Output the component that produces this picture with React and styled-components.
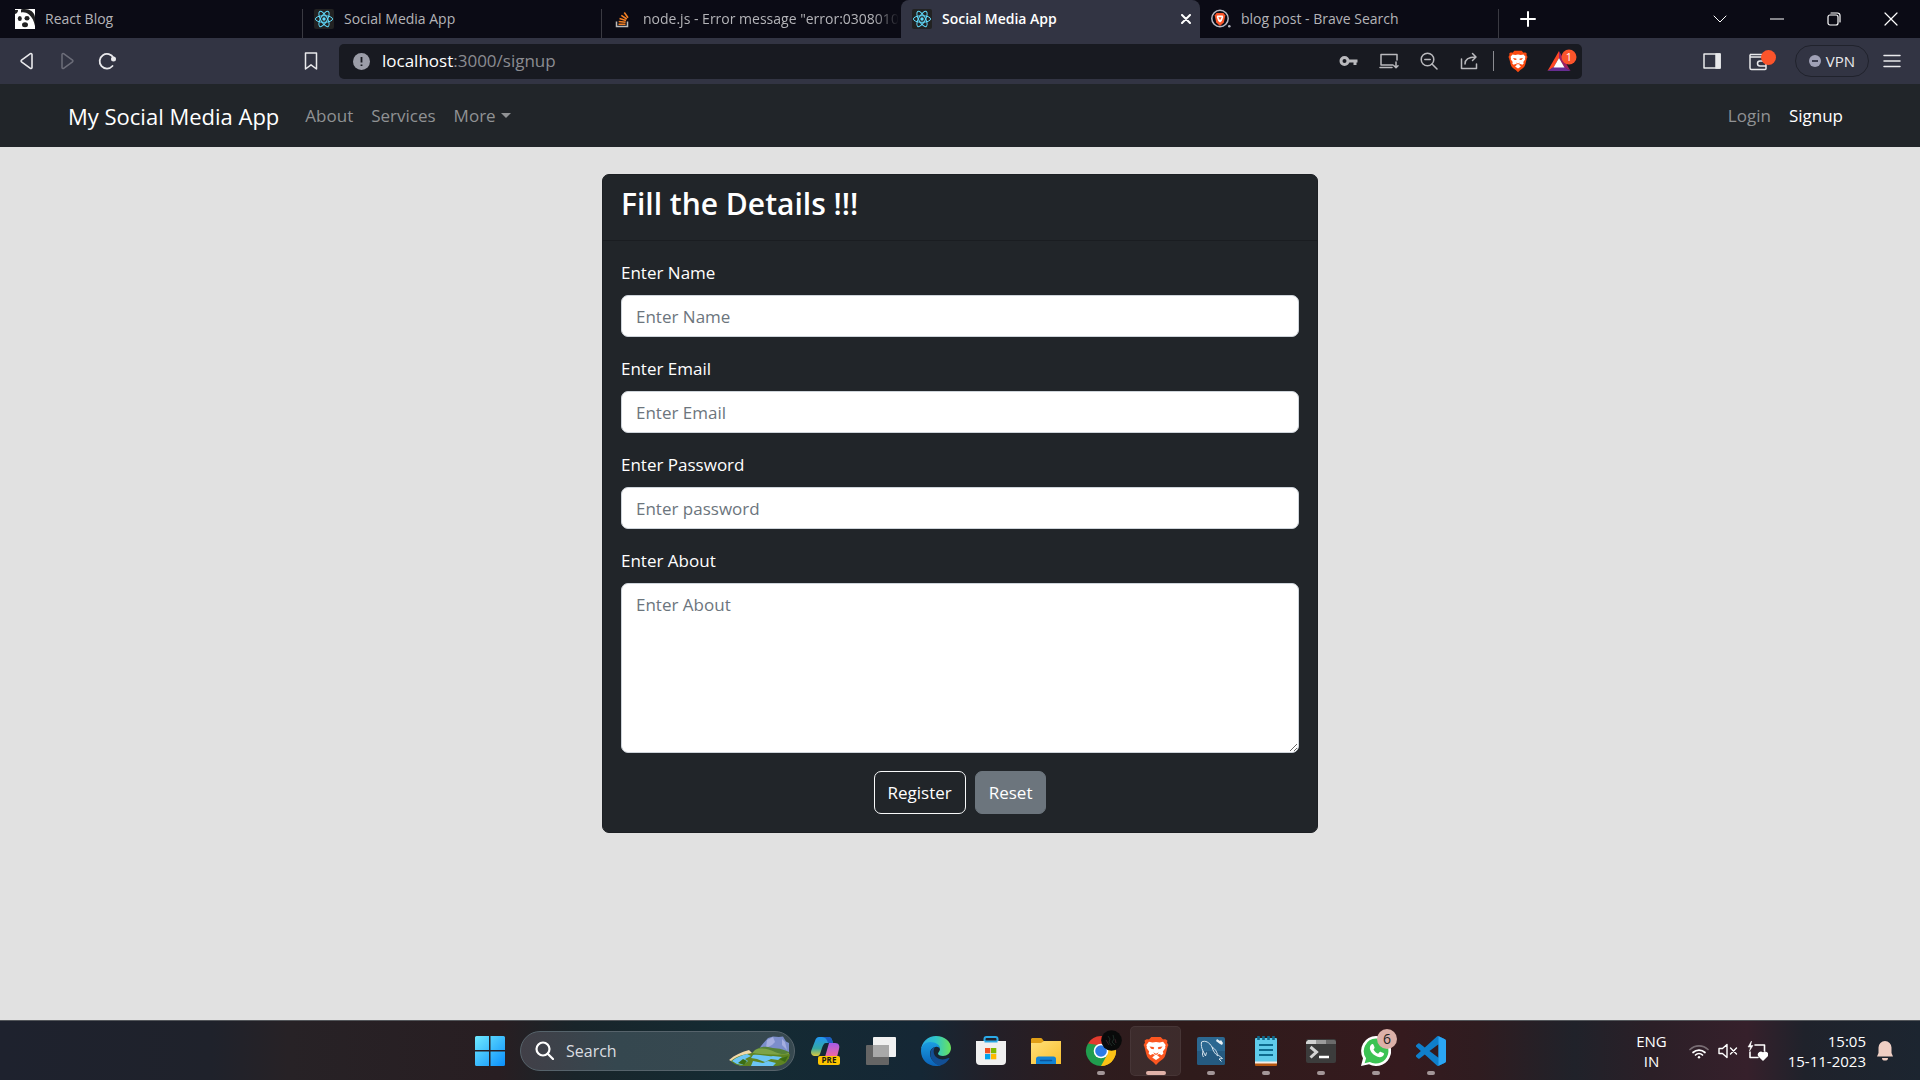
import React from "react";
import styled, { createGlobalStyle, css } from "styled-components";

const GlobalStyle = createGlobalStyle`
  * { box-sizing: border-box; }
  body { margin: 0; background: #e1e1e1; }
  body, button, input, textarea { font-family: "Open Sans", "Noto Sans", sans-serif; }
  button { margin: 0; padding: 0; border: 0; background: none; color: inherit; cursor: pointer; }
  svg { display: block; flex: none; }
  a { text-decoration: none; }
`;

const Screen = styled.div`
  min-height: 100vh;
  display: flex;
  flex-direction: column;
`;

/* ---------- browser chrome ---------- */

const TabStrip = styled.div`
  height: 38px;
  padding: 0 1px 0 4px;
  display: flex;
  background: #0b0b15;
  color: #b4b4b8;
`;

const Tab = styled.button`
  flex: 0 1 299px;
  min-width: 0;
  height: 38px;
  padding: 0 9px 0 11px;
  display: flex;
  align-items: center;
  gap: 10px;
  font-size: 14px;
  line-height: 20px;
  text-align: left;
  background: linear-gradient(#3a3a42, #3a3a42) right bottom / 1px 29px no-repeat;
  ${(p) =>
    p.$beforeActive &&
    css`
      padding-right: 2px;
      background: none;
    `}
  ${(p) =>
    p.$active &&
    css`
      background: #323443;
      color: #fff;
      font-weight: 600;
      border-radius: 8px 8px 0 0;
    `}
`;

const TabTitle = styled.span`
  flex: 1;
  overflow: hidden;
  white-space: nowrap;
  ${(p) => p.$fade && "mask-image: linear-gradient(90deg, #000 90%, transparent);"}
`;

const WindowButton = styled.button`
  width: 57px;
  height: 38px;
  display: grid;
  place-items: center;
  color: #fff;
`;

const Spacer = styled.div`
  flex: 1;
`;

const Toolbar = styled.div`
  height: 46px;
  display: grid;
  grid-template-columns: 339px 1fr 338px;
  align-items: center;
  background: #323443;
  color: #e9e9ec;
`;

const ToolGroup = styled.div`
  display: flex;
  align-items: center;
  padding: ${(p) => p.$pad};
  gap: ${(p) => p.$gap || 0}px;
`;

const ToolButton = styled.button`
  width: ${(p) => p.$w || 40}px;
  height: 35px;
  display: grid;
  place-items: center;
  color: ${(p) => p.$color || "inherit"};
`;

const AddressBar = styled.div`
  height: 35px;
  padding-left: 14px;
  border-radius: 5px;
  display: flex;
  align-items: center;
  background: #181a21;
  color: #b9b9bd;
`;

const Address = styled.button`
  flex: 1;
  padding-left: 12px;
  text-align: left;
  font-size: 17px;
  line-height: 24px;
  color: #8b8c91;
`;

const Host = styled.span`
  color: #fff;
`;

const Divider = styled.span`
  width: 1px;
  height: 20px;
  margin: 0 4px;
  background: #8b8c91;
`;

const VpnButton = styled.button`
  width: 74px;
  height: 32px;
  border: 1px solid #20222c;
  border-radius: 16px;
  display: flex;
  align-items: center;
  justify-content: center;
  gap: 5px;
  font-size: 15px;
  line-height: 20px;
`;

/* ---------- site ---------- */

const Navbar = styled.nav`
  height: 63px;
  padding: 0 68px;
  display: flex;
  align-items: center;
  background: #212529;
`;

const Brand = styled.a`
  margin-right: 17px;
  font-size: 22px;
  line-height: 32px;
  color: #fff;
`;

const NavLink = styled.a`
  padding: 9px;
  display: flex;
  align-items: center;
  gap: 5px;
  font-size: 17px;
  line-height: 26px;
  color: ${(p) => (p.$active ? "#fff" : "#909294")};
`;

const Caret = styled.span`
  border: 5px solid transparent;
  border-top-color: currentColor;
  border-bottom: 0;
`;

const Page = styled.main`
  flex: 1;
  padding: 27px 24px;
  background: #e1e1e1;
`;

const Card = styled.section`
  max-width: 716px;
  margin: 0 auto;
  border: 1px solid #1c1f23;
  border-radius: 7px;
  background: #212529;
  color: #fff;
`;

const CardHeader = styled.header`
  padding: 10px 18px 17px;
  border-bottom: 1px solid #1a1d21;
`;

const CardTitle = styled.h3`
  margin: 0;
  font-size: 30px;
  font-weight: 600;
  line-height: 38px;
`;

const Form = styled.form`
  padding: 18px;
  display: flex;
  flex-direction: column;
  gap: 18px;
`;

const Field = styled.div`
  display: flex;
  flex-direction: column;
  gap: 9px;
`;

const Label = styled.label`
  font-size: 17px;
  line-height: 27px;
`;

const control = css`
  width: 100%;
  padding: 8px 14px;
  border: 1px solid #ced4da;
  border-radius: 7px;
  background: #fff;
  color: #212529;
  font-size: 17px;
  line-height: 26px;
  &::placeholder {
    color: #6c757d;
    opacity: 1;
  }
`;

const Input = styled.input`
  ${control}
  height: 42px;
`;

const TextArea = styled.textarea`
  ${control}
  display: block;
  height: 170px;
  resize: vertical;
`;

const Actions = styled.div`
  display: flex;
  justify-content: center;
  gap: 9px;
`;

const ActionButton = styled.button`
  height: 43px;
  padding: 0 13px;
  border: 1px solid ${(p) => (p.$solid ? "#6c757d" : "#f8f9fa")};
  border-radius: 7px;
  background: ${(p) => (p.$solid ? "#6c757d" : "transparent")};
  color: #fff;
  font-size: 17px;
  line-height: 26px;
`;

/* ---------- taskbar ---------- */

const Taskbar = styled.footer`
  height: 60px;
  border-top: 1px solid #53565a;
  display: grid;
  grid-template-columns: 1fr auto 1fr;
  align-items: center;
  color: #fff;
  background: linear-gradient(90deg, #1e222e 0%, #1f222b 11%, #272226 15%, #281e22 26%, #19252a 30%, #142b33 38%,
    #152735 48%, #241f27 52%, #2e1c1e 57%, #2f1b1b 62%, #351a1e 73%, #2f1c20 77%, #20222a 82%, #2b1f27 86%,
    #36202b 91%, #1f222b 94%, #1c2530 100%);
`;

const TaskIcons = styled.div`
  grid-column: 2;
  display: flex;
  align-items: center;
`;

const TaskButton = styled.button`
  position: relative;
  width: 55px;
  height: 50px;
  display: grid;
  place-items: center;
  &::before {
    content: "";
    position: absolute;
    inset: 0 2px;
    border-radius: 5px;
    ${(p) => p.$active && "background: rgba(255,255,255,.07); border: 1px solid rgba(255,255,255,.05);"}
  }
  &::after {
    content: "";
    position: absolute;
    bottom: 1px;
    width: ${(p) => (p.$active ? 20 : 8)}px;
    height: 4px;
    border-radius: 2px;
    background: ${(p) => (p.$active ? "#e0b1a8" : p.$open ? "#a39698" : "transparent")};
  }
`;

const SearchBox = styled.label`
  width: 275px;
  height: 40px;
  margin: 0 3px;
  padding: 0 3px 0 14px;
  border: 1px solid #56636b;
  border-radius: 20px;
  display: flex;
  align-items: center;
  gap: 12px;
  background: linear-gradient(90deg, #413f47, #35474f 35%, #374950);
`;

const SearchInput = styled.input`
  flex: 1;
  min-width: 0;
  padding: 0;
  border: 0;
  outline: 0;
  background: none;
  color: #fff;
  font-size: 16px;
  line-height: 24px;
  &::placeholder {
    color: #dadde0;
    opacity: 1;
  }
`;

const Badge = styled.span`
  position: absolute;
  top: 3px;
  right: 6px;
  width: 20px;
  height: 20px;
  border-radius: 50%;
  background: #dcb0a8;
  color: #222;
  font-size: 14px;
  line-height: 20px;
`;

const Tray = styled.div`
  grid-column: 3;
  padding-right: 27px;
  display: flex;
  align-items: center;
  justify-content: flex-end;
`;

const TrayText = styled.div`
  font-size: 15px;
  line-height: 20px;
  text-align: ${(p) => p.$align};
`;

const TrayIcons = styled.div`
  margin: 0 20px 0 22px;
  display: flex;
  align-items: center;
  gap: 9px;
`;

const Bell = styled.div`
  margin-left: 11px;
`;

/* ---------- drawings ---------- */

const Line = ({ w = 20, h = w, box = `0 0 ${w} ${h}`, sw = 1.5, children }) => (
  <svg width={w} height={h} viewBox={box} fill="none" stroke="currentColor" strokeWidth={sw} strokeLinecap="round" strokeLinejoin="round" aria-hidden="true">
    {children}
  </svg>
);

const ReactIcon = () => (
  <svg width="20" height="20" viewBox="0 0 20 20" aria-hidden="true">
    <rect width="20" height="20" rx="2" fill="#222" />
    <g fill="none" stroke="#61dafb" strokeWidth="1">
      <ellipse cx="10" cy="10" rx="8.600" ry="3.300" />
      <ellipse cx="10" cy="10" rx="8.600" ry="3.300" transform="rotate(60 10 10)" />
      <ellipse cx="10" cy="10" rx="8.600" ry="3.300" transform="rotate(120 10 10)" />
    </g>
    <circle cx="10" cy="10" r="1.700" fill="#61dafb" />
  </svg>
);

const PandaIcon = () => (
  <svg width="20" height="20" viewBox="0 0 20 20" aria-hidden="true">
    <rect width="20" height="20" fill="#fff" />
    <path d="M6 .5C13-1 19 2 20 8v9C19 12 17 8 14 5.500 11.500 3.500 9 3 6 3.500z" fill="#222" />
    <path d="M0 1h3c0 2-1 3.500-3 4z" fill="#222" />
    <ellipse cx="4.800" cy="9.500" rx="2" ry="2.500" fill="#222" />
    <ellipse cx="12" cy="9.300" rx="2.500" ry="2.300" fill="#222" />
    <ellipse cx="10" cy="15.800" rx="3" ry="2.500" fill="#222" />
  </svg>
);

const StackIcon = () => (
  <svg width="20" height="20" viewBox="0 0 20 20" fill="none" aria-hidden="true">
    <path d="M3.500 12.500v5h11v-5" stroke="#bcbbbb" strokeWidth="1.500" />
    <path d="M5.500 15.300h7M5.700 12.500l6.900.7M6.500 9.500l6.500 2M8.300 6.300l5.500 3.700M11.300 3.500l3.700 5.200" stroke="#f48024" strokeWidth="1.600" />
  </svg>
);

const LionShapes = () => (
  <>
    <path d="M8 1h8l2 2.200c2-.5 3 .3 3.700 1.300L21.300 6l1.200 2.500-.7 1.500c-1 4-1.500 7-2.400 9.400-.7 1.700-2.500 3-4.900 4.800L12 27l-2.500-2.800c-2.400-1.800-4.200-3.100-4.900-4.800C3.700 17 3.200 14 2.200 10l-.7-1.500L2.700 6l-.4-1.500C3 3.500 4 2.700 6 3.200z" fill="#fb4a10" />
    <path d="M12 5.500l3 .5 3-.6 2.200 2.900-.5 1.700.3 1.300-2.200 3.200.5 1.800-1.500 1.600-2-1-2 .9 2.400 2.300L12 22.500l-3.200-2.400 2.400-2.300-2-.9-2 1-1.500-1.600.5-1.800L4 11.300l.3-1.300-.5-1.700L6 5.400l3 .6z" fill="#fff" />
    <path d="M6.500 9.700l3.300.6.7.700-.6 1.300-2-.500zM17.500 9.700l-3.300.6-.7.700.6 1.300 2-.5zM9.800 14.800l.8 1L12 16.500l1.400-.7.800-1-.7 2-1.500.9-1.500-.9z" fill="#fb4a10" />
  </>
);

const BraveIcon = ({ w = 22 }) => (
  <svg width={w} height={Math.round(w * 1.15)} viewBox="1 0 22 28" preserveAspectRatio="none" aria-hidden="true">
    <LionShapes />
  </svg>
);

const BraveSearchIcon = () => (
  <svg width="20" height="20" viewBox="0 0 20 20" aria-hidden="true">
    <circle cx="9" cy="9.500" r="8.200" fill="none" stroke="#b9bac4" strokeWidth="1.500" />
    <path d="M5.500 4h7l1.800 2.500-1.500 7L9 17l-3.800-3.500-1.500-7z" fill="#fb5427" />
    <path d="M6.300 6.500h5.400l.6 1.500-1.500 4L9 13.500 7.200 12 5.700 8z" fill="#fff" />
    <path d="M7.300 8.300l1.700 3 1.700-3z" fill="#fb5427" />
    <circle cx="18.300" cy="17.300" r="1.300" fill="#b9bac4" />
  </svg>
);

const BatIcon = () => (
  <svg width="36" height="30" viewBox="0 0 36 30" aria-hidden="true">
    <path d="M17 5L5.500 25l6-3.500L17 12z" fill="#ff4724" />
    <path d="M17 5l11.500 20-6-3.500L17 12z" fill="#9e1f63" />
    <path d="M5.500 25h23l-6-4h-11z" fill="#662d91" />
    <path d="M17 12l5.500 9.500h-11z" fill="#fff" />
    <circle cx="27" cy="11" r="7.500" fill="#fb542b" />
    <text x="27" y="15" fill="#fff" fontSize="11" fontFamily="Open Sans" textAnchor="middle">1</text>
  </svg>
);

const WindowsIcon = () => (
  <svg width="30" height="30" viewBox="0 0 30 30" aria-hidden="true">
    <defs>
      <linearGradient id="win" x1="0" y1="0" x2="1" y2="1" gradientUnits="objectBoundingBox">
        <stop offset="0" stopColor="#6fe9ff" />
        <stop offset="1" stopColor="#0a8ffb" />
      </linearGradient>
    </defs>
    <path d="M1.500 0H14v14H0V1.500A1.500 1.500 0 011.500 0zM15.500 0h13A1.500 1.500 0 0130 1.500V14H15.500zM0 15.500h14V30H1.500A1.500 1.500 0 010 28.500zM15.500 15.500H30v13a1.500 1.500 0 01-1.500 1.500h-13z" fill="url(#win)" />
  </svg>
);

const LandscapeIcon = () => (
  <svg width="62" height="30" viewBox="0 0 62 30" aria-hidden="true">
    <path d="M32 10L39 2l5-1.500L50 1l4-.5 3 5 3 1.500v10H28z" fill="#7c8ecb" />
    <path d="M38 4l6-3 2 5-3 3-6 3zM53 3l3 3 2 8-5-5z" fill="#a5aee0" />
    <path d="M24 16c4-4 9-6 15-5 7 2 11 0 21 5v7H18z" fill="#568238" />
    <path d="M26 14c7-3 13-1 20 2s10 2 14 1v4H20z" fill="#7da348" />
    <path d="M0 24c6-5 12-8 20-10l3 3-8 4 3 8-7 .5z" fill="#f3d9a8" />
    <path d="M2 25c6-5 13-7 22-8 13 2 30 2 37 1-1 7-6 12-14 12H16C10 30 4 28 2 25z" fill="#5e8422" />
    <path d="M3 25c5-4 10-6 15-7l4 2-6 3 3 2-5 4-6-1zM24 19c7-1 14 2 20 1l9 1-4 3-7-1-6 3-8-3-6-1zM24 25l10 2 5-2 8 2-3 3H22z" fill="#6cc5f5" />
    <path d="M9 27l5-4 4 2-3 4zM50 23l9-3-3 6z" fill="#3c6d12" />
  </svg>
);

const CopilotIcon = () => (
  <svg width="30" height="28" viewBox="0 0 30 28" aria-hidden="true">
    <defs>
      <linearGradient id="copL" x1="0" y1="0" x2="0" y2="1">
        <stop offset="0" stopColor="#2196f3" />
        <stop offset=".6" stopColor="#35a9a5" />
        <stop offset="1" stopColor="#dcc93a" />
      </linearGradient>
      <linearGradient id="copR" x1="0" y1="0" x2="0" y2="1">
        <stop offset="0" stopColor="#a45bea" />
        <stop offset="1" stopColor="#f3699a" />
      </linearGradient>
    </defs>
    <path d="M8 0h10c2 0 3 2 4 6h-7c-2 0-3 2-4 5l-2 6c-1 2-2 2-4 2-4 0-6-2-4.500-6L4 4c1-3 2-4 4-4z" fill="url(#copL)" />
    <path d="M11 0h7c2 0 3 2 4 6h-5C16 2 14 0 11 0z" fill="#1c5dc4" />
    <path d="M18 6h6c4 0 5 3 4 6l-2 8H14z" fill="url(#copR)" />
    <rect x="7" y="19" width="22" height="9" rx="2" fill="#fdc500" />
    <text x="18" y="26" fontSize="8" fontWeight="700" fontFamily="Open Sans" textAnchor="middle" fill="#1d1a10">PRE</text>
  </svg>
);

const TaskViewIcon = () => (
  <svg width="30" height="28" viewBox="0 0 30 28" aria-hidden="true">
    <rect x="7" y="0" width="23" height="20" rx="1" fill="#f1f1f1" />
    <rect x="0" y="8" width="23" height="20" rx="1" fill="#656565" />
    <path d="M7 8h16v12H7z" fill="#a9a9a9" />
  </svg>
);

const EdgeIcon = () => (
  <svg width="30" height="30" viewBox="0 0 30 30" aria-hidden="true">
    <defs>
      <linearGradient id="edgeTop" x1="0" y1=".5" x2="1" y2=".5">
        <stop offset="0" stopColor="#2ba9e5" />
        <stop offset=".5" stopColor="#2fc6c9" />
        <stop offset="1" stopColor="#6be35a" />
      </linearGradient>
      <linearGradient id="edgeBody" x1="0" y1="0" x2="0" y2="1">
        <stop offset="0" stopColor="#1b9de2" />
        <stop offset="1" stopColor="#0a62b8" />
      </linearGradient>
    </defs>
    <path d="M15 0c9 0 15 6 15 12 0 5-4 8-8 8-3 0-5-1-5-2.500 0-1 2-2 2-4.500 0-3-4-6-9-6C5 7 1.500 9.500 0 14 .5 6 7 0 15 0z" fill="url(#edgeTop)" />
    <path d="M0 15c0-5 4-9 9-9 6 0 10 3 10 7-1-2-3-2.500-4.500-2C9 12 8 17 10 22c2 4 6 7 10 7.200-1.500.6-3 .8-5 .8C6.500 30 0 23.500 0 15z" fill="url(#edgeBody)" />
    <path d="M14 11c-4 1-5.500 6-4 10.500C12 27 17 30 20 29.200c3.500-1 6.500-3.500 8.300-6.400.4-.7-.2-1.100-.9-.7-6 3-13 1-14.500-4.500-.6-2.600 0-5 1.100-6.600z" fill="#124f94" />
  </svg>
);

const StoreIcon = () => (
  <svg width="30" height="30" viewBox="0 0 30 30" aria-hidden="true">
    <path d="M8.500 7V3a2 2 0 012-2h9a2 2 0 012 2v4" fill="none" stroke="#2baae8" strokeWidth="2" />
    <path d="M0 5h30v20a4 4 0 01-4 4H4a4 4 0 01-4-4z" fill="#f0f0f0" />
    <path d="M8.500 5.500h13" stroke="#2baae8" strokeWidth="2" />
    <path d="M9 12h5.300v5.300H9z" fill="#f25022" />
    <path d="M15 12h5.300v5.300H15z" fill="#7fba00" />
    <path d="M9 18h5.300v5.300H9z" fill="#00a4ef" />
    <path d="M15 18h5.300v5.300H15z" fill="#ffb900" />
  </svg>
);

const FolderIcon = () => (
  <svg width="30" height="26" viewBox="0 0 30 26" aria-hidden="true">
    <defs>
      <linearGradient id="fold" x1="0" y1="0" x2="1" y2="1">
        <stop offset="0" stopColor="#ffe07a" />
        <stop offset="1" stopColor="#f9bf2e" />
      </linearGradient>
    </defs>
    <path d="M1 0h9c1.500 0 2 3 3 3h16v8H0V1z" fill="#e09f17" />
    <path d="M10 5l3-2h17v23H0V5z" fill="url(#fold)" />
    <path d="M5 26v-5a2.500 2.500 0 012.500-2.500h15A2.500 2.500 0 0125 21v5z" fill="#1283d4" />
    <path d="M9.500 22.500h11" stroke="#0b559d" strokeWidth="1.500" strokeLinecap="round" />
  </svg>
);

const ChromeIcon = () => (
  <svg width="42" height="42" viewBox="-6 0 42 42" aria-hidden="true">
    <path d="M15 21L2 13.500A15 15 0 0128 13.500z" fill="#e33b2e" />
    <path d="M15 21L28 13.500A15 15 0 0115 36z" fill="#fbc116" />
    <path d="M15 21L15 36A15 15 0 012 13.500z" fill="#209d4e" />
    <path d="M15 14h13.200A15 15 0 0115 36l6.500-11.500z" fill="#fbc116" />
    <path d="M9 24.500L2 13.500 12 15zM15 28l6.300-3.500L15 36z" fill="#209d4e" />
    <circle cx="15" cy="21" r="7.300" fill="#fff" />
    <circle cx="15" cy="21" r="5.800" fill="#2c7be5" />
    <circle cx="25.500" cy="10.500" r="10.300" fill="#090a0a" />
    <path d="M22 6l2 3-1 3 3 4M27 5l1 4-2 3 3 3" stroke="#1d2c26" fill="none" />
    <path d="M20 10l3 5M29 9l1 4" stroke="#351f25" fill="none" />
  </svg>
);

const WorkbenchIcon = () => (
  <svg width="28" height="28" viewBox="0 0 28 28" aria-hidden="true">
    <rect width="28" height="28" rx="2" fill="#2c6891" />
    <path d="M0 14h28v12a2 2 0 01-2 2H2a2 2 0 01-2-2z" fill="#255a80" />
    <path d="M6.500 20c-1.500-2-1-4-.5-6-1.500-3-2-6-1.500-9 4-2 8 .5 10.500 5 3.500 2 4.500 4.500 5.500 7.500l5 4-3.500.5 2.500 2.500M15 10c1 4 3 7 6 9M6 14l2.500 5 1-3.500" fill="none" stroke="#d6e4ee" strokeWidth="1" />
    <path d="M20 2l3 2 1-1 2 3-1 2-2-1-4-3z" fill="#e9f1f6" />
  </svg>
);

const NotepadIcon = () => (
  <svg width="22" height="30" viewBox="0 0 22 30" aria-hidden="true">
    <rect y="25" width="22" height="5" rx="1" fill="#b5560f" />
    <rect y="2" width="22" height="25" rx="1" fill="#5fcbea" />
    <rect y="25.500" width="22" height="2" fill="#f4ece6" />
    <path d="M4 9h14M4 14h14M4 19h14" stroke="#0d6b8f" strokeWidth="2" />
    <path d="M3.500 0v4M8.500 0v4M13.500 0v4M18.500 0v4" stroke="#116b8e" strokeWidth="2.600" />
  </svg>
);

const TerminalIcon = () => (
  <svg width="30" height="24" viewBox="0 0 30 24" aria-hidden="true">
    <rect width="30" height="24" rx="2" fill="#3c3c3c" />
    <path d="M2 1h8v4H0V3z" fill="#d2d2d2" />
    <path d="M10 1h10v4H10z" fill="#9b9b9b" />
    <path d="M20 1h8a2 2 0 012 2v2H20z" fill="#6b6b6b" />
    <path d="M4.500 8l6 5-6 5.500" fill="none" stroke="#d5d5d5" strokeWidth="3" />
    <path d="M13 18h10" stroke="#fff" strokeWidth="2.500" />
  </svg>
);

const WhatsAppIcon = () => (
  <svg width="30" height="30" viewBox="0 0 30 30" aria-hidden="true">
    <path d="M15 0a15 15 0 11-7 28.200L0 30l2-7.700A15 15 0 0115 0z" fill="#fff" />
    <path d="M15 2.500a12.500 12.500 0 11-6.200 23.400l-5.200 1.300 1.500-5A12.500 12.500 0 0115 2.500z" fill="#3bc353" />
    <path d="M10.500 8.500c.8-.7 1.600-.5 2 .3l1 2.500c.2.600-.1 1.200-1 2.100.9 1.900 2.500 3.400 4.600 4.300l1.600-1.600c.4-.4.800-.4 1.300-.2l2.400 1.200c.7.400.7.900.4 1.700-.9 2.200-3.600 3-6.200 2-4-1.500-7-4.500-7.700-8-.2-1.800.4-3.400 1.600-4.300z" fill="#fff" />
  </svg>
);

const CodeIcon = () => (
  <svg width="30" height="30" viewBox="0 0 24 24" aria-hidden="true">
    <path d="M23.150 2.587L18.210.21a1.494 1.494 0 0 0-1.705.29l-9.460 8.630-4.120-3.128a.999.999 0 0 0-1.276.057L.327 7.261A1 1 0 0 0 .326 8.740L3.899 12 .326 15.260a1 1 0 0 0 .001 1.479L1.650 17.940a.999.999 0 0 0 1.276.057l4.120-3.128 9.460 8.630a1.492 1.492 0 0 0 1.704.29l4.942-2.377A1.500 1.500 0 0 0 24 20.060V3.939a1.500 1.500 0 0 0-.85-1.352zm-5.146 14.861L10.826 12l7.178-5.448v10.896z" fill="#0f7fcb" />
    <path d="M18 .2l5.150 2.387A1.500 1.500 0 0124 3.939V20.060a1.500 1.500 0 01-.85 1.352L18 23.800z" fill="#2ba5f3" />
  </svg>
);

const BellIcon = () => (
  <svg width="16" height="20" viewBox="0 0 16 20" aria-hidden="true">
    <path d="M8 0a6.500 6.500 0 016.500 6.500V12L16 15.500H0L1.500 12V6.500A6.500 6.500 0 018 0zM5 17h6a3 2.600 0 01-6 0z" fill="#efcfc4" />
  </svg>
);

/* ---------- screen ---------- */

const tabs = [
  { title: "React Blog", icon: <PandaIcon /> },
  { title: "Social Media App", icon: <ReactIcon /> },
  { title: 'node.js - Error message "error:0308010', icon: <StackIcon />, beforeActive: true },
  { title: "Social Media App", icon: <ReactIcon />, active: true },
  { title: "blog post - Brave Search", icon: <BraveSearchIcon /> },
];

const fields = [
  { id: "name", label: "Enter Name", placeholder: "Enter Name", type: "text" },
  { id: "email", label: "Enter Email", placeholder: "Enter Email", type: "email" },
  { id: "password", label: "Enter Password", placeholder: "Enter password", type: "password" },
];

const apps = [
  { name: "Copilot", icon: <CopilotIcon /> },
  { name: "Task view", icon: <TaskViewIcon /> },
  { name: "Edge", icon: <EdgeIcon /> },
  { name: "Store", icon: <StoreIcon /> },
  { name: "File Explorer", icon: <FolderIcon /> },
  { name: "Chrome", icon: <ChromeIcon />, open: true },
  { name: "Brave", icon: <BraveIcon w={26} />, active: true },
  { name: "Workbench", icon: <WorkbenchIcon />, open: true },
  { name: "Notepad", icon: <NotepadIcon />, open: true },
  { name: "Terminal", icon: <TerminalIcon />, open: true },
  { name: "WhatsApp", icon: <WhatsAppIcon />, open: true, badge: 6 },
  { name: "Code", icon: <CodeIcon />, open: true },
];

function BrowserChrome() {
  return (
    <>
      <TabStrip>
        {tabs.map((t, i) => (
          <Tab key={i} $active={t.active} $beforeActive={t.beforeActive}>
            {t.icon}
            <TabTitle $fade={t.beforeActive}>{t.title}</TabTitle>
            {t.active && (
              <Line w={10} sw={2}><path d="M1 1l8 8M9 1L1 9" /></Line>
            )}
          </Tab>
        ))}
        <WindowButton aria-label="New tab"><Line w={16} sw={2}><path d="M8 1v14M1 8h14" /></Line></WindowButton>
        <Spacer />
        <WindowButton aria-label="Search tabs"><Line w={14} h={8} sw={1}><path d="M1 1l6 6 6-6" /></Line></WindowButton>
        <WindowButton aria-label="Minimize"><Line w={14} h={2} sw={1.2}><path d="M0 1h14" /></Line></WindowButton>
        <WindowButton aria-label="Restore"><Line w={14} sw={1.2}><rect x="1" y="3" width="10" height="10" rx="2" /><path d="M4 1h6.500A2.500 2.500 0 0113 3.500V10" /></Line></WindowButton>
        <WindowButton aria-label="Close"><Line w={14} sw={1.2}><path d="M1 1l12 12M13 1L1 13" /></Line></WindowButton>
      </TabStrip>
      <Toolbar>
        <ToolGroup $pad="0 8px 0 7px">
          <ToolButton aria-label="Back"><Line w={16} h={18} sw={1.600}><path d="M13 2.500v13a1 1 0 01-1.600.8L2.500 9.800a1 1 0 010-1.600l8.900-6.500a1 1 0 011.600.8z" /></Line></ToolButton>
          <ToolButton aria-label="Forward" $color="#6c6d79"><Line w={16} h={18}><path d="M3 2.500v13a1 1 0 001.600.8l8.900-6.500a1 1 0 000-1.600L4.600 1.700A1 1 0 003 2.500z" /></Line></ToolButton>
          <ToolButton aria-label="Reload">
            <Line w={18} sw={1.800}><path d="M14.500 14A7.300 7.300 0 1115.500 6" /><circle cx="15.500" cy="7" r="1.600" fill="currentColor" /></Line>
          </ToolButton>
          <Spacer />
          <ToolButton aria-label="Bookmark"><Line w={14} h={18}><path d="M1.500 1h11v16L7 12.800 1.500 17z" /></Line></ToolButton>
        </ToolGroup>
        <AddressBar>
          <svg width="17" height="17" viewBox="0 0 17 17" aria-hidden="true">
            <circle cx="8.500" cy="8.500" r="8.500" fill="#9b9da8" />
            <path d="M8.500 4v5.500M8.500 11.500v1.500" stroke="#181a21" strokeWidth="1.800" />
          </svg>
          <Address><Host>localhost</Host>:3000/signup</Address>
          <ToolButton aria-label="Passwords">
            <Line w={20} h={12} sw={3}><circle cx="5.500" cy="6" r="3.500" /><path d="M9 6h9.500M16 6v4" strokeLinecap="butt" /></Line>
          </ToolButton>
          <ToolButton aria-label="Install"><Line w={20} h={16}><path d="M18 7V1.500H2V12h12M1 14.500h12M17 9v5.500M15 12.800l2 2 2-2" /></Line></ToolButton>
          <ToolButton aria-label="Zoom"><Line w={18}><circle cx="7.500" cy="7.500" r="6.300" /><path d="M4.800 7.500h5.400M12 12l5 5" /></Line></ToolButton>
          <ToolButton aria-label="Share"><Line w={18}><path d="M1.500 7v9.500h15V12M5 12c0-5 3-7 10.500-7M12.500 1.500L16 5l-3.500 3.500" /></Line></ToolButton>
          <Divider />
          <ToolButton aria-label="Brave Shields"><BraveIcon w={20} /></ToolButton>
          <ToolButton $w={44} aria-label="Brave Rewards"><BatIcon /></ToolButton>
        </AddressBar>
        <ToolGroup $pad="0 13px 0 0" $gap={8}>
          <Spacer />
          <ToolGroup $pad="0">
            <ToolButton $w={50} aria-label="Sidebar">
              <Line w={18} h={16}><rect x="1" y="1" width="16" height="14" /><path d="M13 1h4v14h-4z" fill="currentColor" /></Line>
            </ToolButton>
            <ToolButton $w={50} aria-label="Wallet">
              <svg width="28" height="24" viewBox="0 0 28 24" fill="none" stroke="currentColor" strokeWidth="1.500" aria-hidden="true">
                <path d="M17 8V5.500H2M17 8H2V19a1.500 1.500 0 001.500 1.500H17a1 1 0 001-1V9a1 1 0 00-1-1zM2 8V5.500" />
                <path d="M18 12h-6a2 2 0 000 5h6" />
                <circle cx="20.500" cy="8.500" r="7.500" fill="#fb542b" stroke="none" />
              </svg>
            </ToolButton>
          </ToolGroup>
          <VpnButton>
            <svg width="12" height="12" viewBox="0 0 12 12" aria-hidden="true"><circle cx="6" cy="6" r="6" fill="#a0a1b6" /><path d="M3 6h6" stroke="#323443" strokeWidth="1.800" /></svg>
            VPN
          </VpnButton>
          <ToolButton $w={30} aria-label="Menu"><Line w={18} h={14}><path d="M1 1.500h16M1 7h16M1 12.500h16" /></Line></ToolButton>
        </ToolGroup>
      </Toolbar>
    </>
  );
}

function SignupCard() {
  return (
    <Card>
      <CardHeader><CardTitle>Fill the Details !!!</CardTitle></CardHeader>
      <Form onSubmit={(e) => e.preventDefault()}>
        {fields.map((f) => (
          <Field key={f.id}>
            <Label htmlFor={f.id}>{f.label}</Label>
            <Input id={f.id} type={f.type} placeholder={f.placeholder} />
          </Field>
        ))}
        <Field>
          <Label htmlFor="about">Enter About</Label>
          <TextArea id="about" placeholder="Enter About" />
        </Field>
        <Actions>
          <ActionButton type="submit">Register</ActionButton>
          <ActionButton type="reset" $solid>Reset</ActionButton>
        </Actions>
      </Form>
    </Card>
  );
}

function SystemTaskbar() {
  return (
    <Taskbar>
      <TaskIcons>
        <TaskButton aria-label="Start"><WindowsIcon /></TaskButton>
        <SearchBox>
          <Line w={19} sw={2.200}><circle cx="8" cy="8" r="6.500" /><path d="M13 13l5 5" /></Line>
          <SearchInput type="text" placeholder="Search" aria-label="Search" />
          <LandscapeIcon />
        </SearchBox>
        {apps.map((a) => (
          <TaskButton key={a.name} aria-label={a.name} $open={a.open} $active={a.active}>
            {a.icon}
            {a.badge && <Badge>{a.badge}</Badge>}
          </TaskButton>
        ))}
      </TaskIcons>
      <Tray>
        <TrayText $align="center">ENG<br />IN</TrayText>
        <TrayIcons>
          <Line w={20} h={16} sw={1.700}>
            <path d="M1 6.500a13 13 0 0118 0" opacity=".35" />
            <path d="M4 9.500a9 9 0 0112 0M6.500 12a5 5 0 017 0" />
            <circle cx="10" cy="14.200" r="1.200" fill="currentColor" stroke="none" />
          </Line>
          <Line w={20} h={16} sw={1.400}><path d="M1 5.500h3.500L9 1.500v13L4.500 10.500H1zM12.500 5l6 6M18.500 5l-6 6" /></Line>
          <Line w={21} h={20} sw={1.600}>
            <path d="M8 4h9.500v6M3 11v5.500h8" />
            <path d="M4.500 0L1 6h2.500l-1 4L6 4.500H3.800z" fill="currentColor" strokeWidth=".5" />
            <path d="M16 19l-4-4a2.300 2.300 0 014-2.500 2.300 2.300 0 014 2.500z" fill="currentColor" />
          </Line>
        </TrayIcons>
        <TrayText $align="right">15:05<br />15-11-2023</TrayText>
        <Bell><BellIcon /></Bell>
      </Tray>
    </Taskbar>
  );
}

export default function App() {
  return (
    <Screen>
      <GlobalStyle />
      <BrowserChrome />
      <Navbar>
        <Brand href="#home">My Social Media App</Brand>
        <NavLink href="#about">About</NavLink>
        <NavLink href="#services">Services</NavLink>
        <NavLink href="#more">More<Caret /></NavLink>
        <Spacer />
        <NavLink href="#login">Login</NavLink>
        <NavLink href="#signup" $active>Signup</NavLink>
      </Navbar>
      <Page><SignupCard /></Page>
      <SystemTaskbar />
    </Screen>
  );
}
